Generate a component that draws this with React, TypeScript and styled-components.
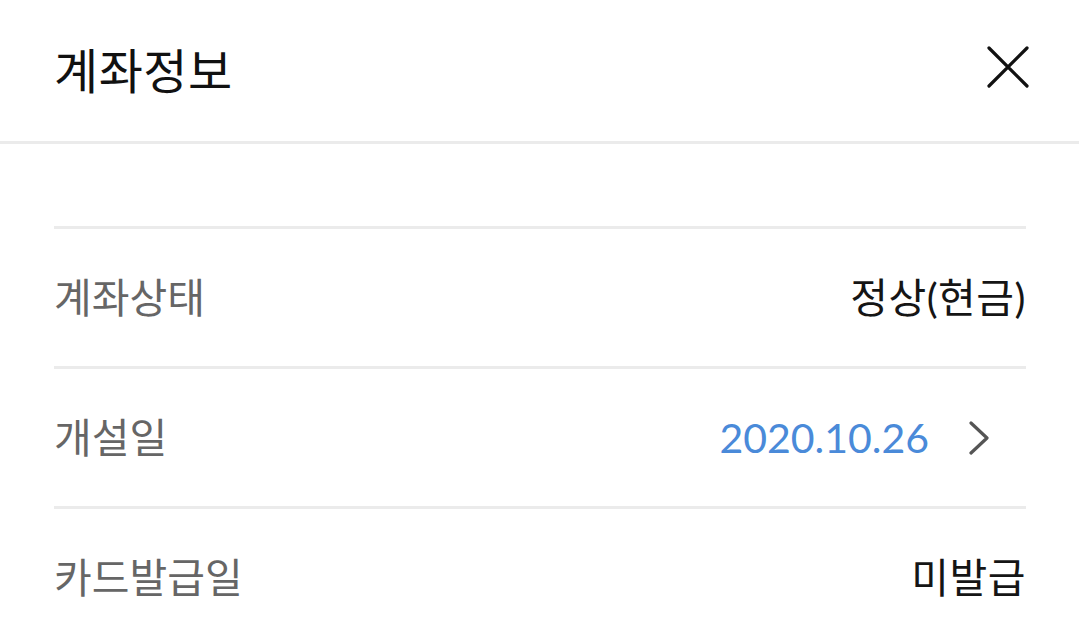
import React from "react";
import styled, { createGlobalStyle } from "styled-components";

const Global = createGlobalStyle`
  html, body { margin: 0; padding: 0; background: #fff; }
  body { font-family: Lato, "Noto Sans CJK KR", sans-serif; -webkit-font-smoothing: antialiased; }
`;

const Page = styled.div`
  width: 1079px;
  height: 644px;
  overflow: hidden;
  background: #fff;
`;

const Header = styled.header`
  height: 141px;
  display: flex;
  align-items: center;
  justify-content: space-between;
  padding: 0 50px 0 54px;
  border-bottom: 3px solid #ebebeb;
  box-sizing: content-box;
`;

const Title = styled.h1`
  margin: 0;
  font-size: 48px;
  font-weight: 400;
  color: #111;
  letter-spacing: 0.5px;
  line-height: 1;
`;

const CloseButton = styled.button`
  border: 0;
  background: none;
  padding: 0;
  width: 42px;
  height: 42px;
  margin-bottom: 8px;
  display: flex;
  align-items: center;
  justify-content: center;
  cursor: pointer;
`;

const Body = styled.div`
  padding: 82px 53px 0 54px;
`;

const Row = styled.div`
  height: 137px;
  border-top: 3px solid #ebebeb;
  display: flex;
  align-items: center;
  justify-content: space-between;
`;

const Label = styled.span`
  font-size: 41px;
  color: #666;
  line-height: 1;
`;

const Value = styled.span<{ $link?: boolean }>`
  font-size: 41px;
  line-height: 1;
  letter-spacing: ${(p) => (p.$link ? "0" : "0.5px")};
  color: ${(p) => (p.$link ? "#4a8ad9" : "#151515")};
  display: flex;
  align-items: center;
`;

const Chevron = styled.span`
  display: flex;
  margin-left: 40px;
  margin-right: 36px;
`;

const rows: { label: string; value: string; link?: boolean }[] = [
  { label: "계좌상태", value: "정상(현금)" },
  { label: "개설일", value: "2020.10.26", link: true },
  { label: "카드발급일", value: "미발급" },
];

export default function App() {
  return (
    <Page>
      <Global />
      <Header>
        <Title>계좌정보</Title>
        <CloseButton aria-label="닫기">
          <svg width="42" height="42" viewBox="0 0 42 42">
            <path d="M2 2 L40 40 M40 2 L2 40" stroke="#111" strokeWidth="3.2" strokeLinecap="round" />
          </svg>
        </CloseButton>
      </Header>
      <Body>
        {rows.map((r) => (
          <Row key={r.label}>
            <Label>{r.label}</Label>
            <Value $link={r.link}>
              {r.value}
              {r.link && (
                <Chevron>
                  <svg width="21" height="34" viewBox="0 0 21 34">
                    <path d="M2 2 L18 17 L2 32" fill="none" stroke="#555" strokeWidth="3.2" strokeLinecap="round" strokeLinejoin="round" />
                  </svg>
                </Chevron>
              )}
            </Value>
          </Row>
        ))}
      </Body>
    </Page>
  );
}
